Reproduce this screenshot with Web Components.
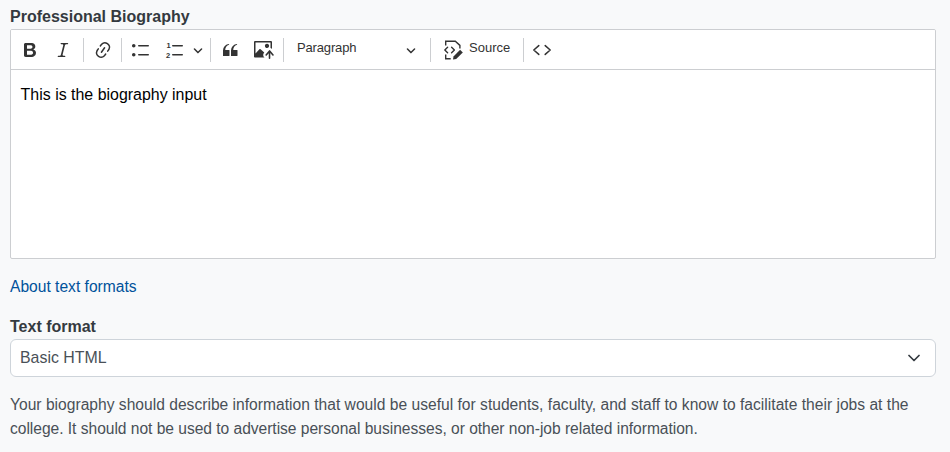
<!DOCTYPE html>
<html lang="en">
<head>
<meta charset="utf-8">
<title>Professional Biography</title>
<style>
  html, body { margin: 0; background: #f8f9fa; }
  body { font: 16px/24px "Liberation Sans", Arial, sans-serif; color: #343a40; }
  .line-a { display: block; letter-spacing: .012px; }
  .line-b { display: block; letter-spacing: -.03px; }
</style>
</head>
<body>
<bio-form>
  <form-label>Professional Biography</form-label>
  <rich-editor>This is the biography input</rich-editor>
  <format-link>About text formats</format-link>
  <form-label class="format">Text format</form-label>
  <format-select>Basic HTML</format-select>
  <help-text><span class="line-a">Your biography should describe information that would be useful for students, faculty, and staff to know to facilitate their jobs at the</span> <span class="line-b">college. It should not be used to advertise personal businesses, or other non-job related information.</span></help-text>
</bio-form>

<script>
(function () {
  const CHEVRON = `<svg class="chev" viewBox="0 0 10 10" aria-hidden="true"><path d="M.941 4.523a.75.75 0 1 1 1.06-1.06l3.006 3.005 3.005-3.005a.75.75 0 1 1 1.06 1.06l-3.549 3.55a.75.75 0 0 1-1.168-.136L.941 4.523z"/></svg>`;

  const ICONS = {
    bold: `<path d="M10.187 17H5.773c-.637 0-1.092-.138-1.364-.415-.273-.277-.409-.718-.409-1.323V4.738c0-.617.14-1.062.419-1.332.279-.27.73-.406 1.354-.406h4.68c.69 0 1.288.041 1.793.124.506.083.96.242 1.36.478.341.197.644.447.906.75a3.262 3.262 0 0 1 .808 2.162c0 1.401-.722 2.426-2.167 3.075C15.05 10.175 16 11.315 16 13.01a3.756 3.756 0 0 1-2.296 3.504 6.1 6.1 0 0 1-1.517.377c-.571.073-1.238.11-2 .11zm-.217-6.217H7v4.087h3.069c1.977 0 2.965-.69 2.965-2.072 0-.707-.256-1.22-.768-1.537-.512-.319-1.277-.478-2.296-.478zM7 5.13v3.619h2.606c.729 0 1.292-.067 1.69-.2a1.6 1.6 0 0 0 .91-.765c.165-.267.247-.566.247-.897 0-.707-.26-1.176-.778-1.409-.519-.232-1.31-.348-2.375-.348H7z"/>`,
    italic: `<path d="m9.586 14.633.021.004c-.036.335.095.655.393.962.082.083.173.15.274.201h1.474a.6.6 0 1 1 0 1.2H5.304a.6.6 0 0 1 0-1.2h1.15c.474-.07.809-.182 1.005-.334.157-.122.291-.32.404-.597l2.416-9.55a1.053 1.053 0 0 0-.281-.823 1.12 1.12 0 0 0-.442-.296H8.15a.6.6 0 0 1 0-1.2h6.443a.6.6 0 1 1 0 1.2h-1.195c-.376.056-.65.155-.823.296-.215.175-.423.439-.623.79l-2.366 9.347z"/>`,
    link: `<path d="m11.077 15 .991-1.416a.75.75 0 1 1 1.229.86l-1.148 1.64a.748.748 0 0 1-.217.206 5.251 5.251 0 0 1-8.503-5.955.741.741 0 0 1 .12-.274l1.147-1.639a.75.75 0 1 1 1.228.86L4.933 10.7l.006.003a3.75 3.75 0 0 0 6.132 4.294l.006.004zm5.494-5.335a.748.748 0 0 1-.12.274l-1.147 1.639a.75.75 0 1 1-1.228-.86l.86-1.23a3.75 3.75 0 0 0-6.144-4.301l-.86 1.229a.75.75 0 0 1-1.229-.86l1.148-1.64a.748.748 0 0 1 .217-.206 5.251 5.251 0 0 1 8.503 5.955zm-4.563-2.532a.75.75 0 0 1 .184 1.045l-3.155 4.505a.75.75 0 1 1-1.229-.86l3.155-4.506a.75.75 0 0 1 1.045-.184z"/>`,
    bullets: `<path d="M7 5.75c0 .414.336.75.75.75h9.5a.75.75 0 1 0 0-1.5h-9.5a.75.75 0 0 0-.75.75zm-6 0C1 4.784 1.777 4 2.75 4c.966 0 1.75.777 1.75 1.75 0 .966-.777 1.75-1.75 1.75C1.784 7.5 1 6.723 1 5.75zm6 9c0 .414.336.75.75.75h9.5a.75.75 0 1 0 0-1.5h-9.5a.75.75 0 0 0-.75.75zm-6 0c0-.966.777-1.75 1.75-1.75.966 0 1.75.777 1.75 1.75 0 .966-.777 1.75-1.75 1.75-.966 0-1.75-.777-1.75-1.75z"/>`,
    numbers: `<path d="M7 5.75c0 .414.336.75.75.75h9.5a.75.75 0 1 0 0-1.5h-9.5a.75.75 0 0 0-.75.75zm0 9c0 .414.336.75.75.75h9.5a.75.75 0 1 0 0-1.5h-9.5a.75.75 0 0 0-.75.75z"/><text x="1.6" y="8" font-family="Liberation Sans, sans-serif" font-weight="700" font-size="7.5">1</text><text x="1" y="17.5" font-family="Liberation Sans, sans-serif" font-weight="700" font-size="7.5">2</text>`,
    quote: `<path d="M3 10.423a6.5 6.5 0 0 1 6.056-6.408l.038.67C6.448 5.423 5.354 7.663 5.22 10H9c.552 0 .5.432.5.986v4.511c0 .554-.448.503-1 .503h-5c-.552 0-.5-.449-.5-1.003v-4.574zm8 0a6.5 6.5 0 0 1 6.056-6.408l.038.67c-2.646.739-3.74 2.979-3.873 5.315H17c.552 0 .5.432.5.986v4.511c0 .554-.448.503-1 .503h-5c-.552 0-.5-.449-.5-1.003v-4.574z"/>`,
    image: `<path d="M1.201 1C.538 1 0 1.47 0 2.1v14.363c0 .64.534 1.037 1.186 1.037h9.494a2.97 2.97 0 0 1-.414-.287 2.998 2.998 0 0 1-1.055-2.03 3.003 3.003 0 0 1 .693-2.185l.383-.455-.02.018-3.65-3.41a.695.695 0 0 0-.957-.034L1.5 13.6V2.5h15v5.535a2.97 2.97 0 0 1 1.412.932l.088.105V2.1c0-.63-.547-1.1-1.2-1.1H1.202Zm11.713 2.803a2.146 2.146 0 0 0-2.049 1.992 2.14 2.14 0 0 0 1.28 2.096 2.13 2.13 0 0 0 2.644-3.11 2.134 2.134 0 0 0-1.875-.978Z"/><path d="M15.522 19.1a.79.79 0 0 0 .79-.79v-5.373l2.059 2.455a.79.79 0 1 0 1.211-1.015l-3.352-3.995a.79.79 0 0 0-.995-.179.784.784 0 0 0-.299.221l-3.35 3.99a.79.79 0 1 0 1.21 1.017l1.936-2.306v5.185c0 .436.353.79.79.79Z"/>`,
    source: `<g fill="none" stroke="currentColor" stroke-width="1.4"><path d="M2.7 5.5V1.2h9.6l4.6 4.2v3.2"/><path d="M2.7 14.5v4.3h5"/><path d="M4.6 7.3 1.8 10l2.8 2.7M8.6 7.3l2.8 2.7-2.8 2.7" stroke-linecap="round" stroke-linejoin="round"/></g><path d="m10 19.6.5-3.2 6.6-6.6 2.7 2.7-6.6 6.6z"/>`,
    code: `<g fill="none" stroke="currentColor" stroke-width="1.5" stroke-linecap="round" stroke-linejoin="round"><path d="M6.8 5.6 1.8 10l5 4.4M13.2 5.6l5 4.4-5 4.4"/></g>`,
  };

  class FormLabel extends HTMLElement {
    constructor() {
      super();
      this.attachShadow({ mode: "open" }).innerHTML = `
        <style>
          :host { display: block; font-weight: 700; line-height: 24px; color: #343a40; }
        </style>
        <slot></slot>`;
    }
  }

  class ToolButton extends HTMLElement {
    constructor() {
      super();
      const icon = ICONS[this.getAttribute("icon")] || "";
      this.attachShadow({ mode: "open" }).innerHTML = `
        <style>
          :host { display: inline-flex; align-items: center; height: 39px; color: #333; flex: none; }
          svg { display: block; width: 20px; height: 20px; fill: currentColor; }
          span { font-size: 13px; line-height: 20px; position: relative; top: -2px; }
          :host([labelled]) span { margin-left: 6px; }
        </style>
        <svg viewBox="0 0 20 20" aria-hidden="true">${icon}</svg><span><slot></slot></span>`;
    }
  }

  class ToolSep extends HTMLElement {
    constructor() {
      super();
      this.attachShadow({ mode: "open" }).innerHTML = `
        <style>
          :host { display: block; width: 1px; height: 24px; background: #ccced1; flex: none; }
        </style>`;
    }
  }

  class EditorToolbar extends HTMLElement {
    constructor() {
      super();
      this.attachShadow({ mode: "open" }).innerHTML = `
        <style>
          :host {
            display: flex; align-items: center; height: 39px; background: #fff;
            border-bottom: 1px solid #ccced1; color: #333;
          }
          svg.chev { display: block; width: 10px; height: 10px; fill: currentColor; flex: none; }
          .b { margin-left: 9px; }
          .i { margin-left: 13px; }
          .s1 { margin-left: 10px; }
          .l { margin-left: 8.5px; }
          .s2 { margin-left: 8.5px; }
          .ul { margin-left: 9px; }
          .ol { margin-left: 14px; }
          .c1 { margin-left: 8px; }
          .s3 { margin-left: 7px; }
          .q { margin-left: 9px; }
          .im { margin-left: 14px; }
          .s4 { margin-left: 9px; }
          .para { width: 109px; margin-left: 13px; font-size: 13px; letter-spacing: -.15px; line-height: 20px; position: relative; top: -2px; flex: none; }
          .c2 { margin-left: 0; margin-top: 1px; }
          .s5 { margin-left: 14px; }
          .src { margin-left: 12px; }
          .s6 { margin-left: 13px; }
          .cd { margin-left: 8px; }
        </style>
        <tool-button class="b" icon="bold"></tool-button>
        <tool-button class="i" icon="italic"></tool-button>
        <tool-sep class="s1"></tool-sep>
        <tool-button class="l" icon="link"></tool-button>
        <tool-sep class="s2"></tool-sep>
        <tool-button class="ul" icon="bullets"></tool-button>
        <tool-button class="ol" icon="numbers"></tool-button>
        <span class="c1">${CHEVRON}</span>
        <tool-sep class="s3"></tool-sep>
        <tool-button class="q" icon="quote"></tool-button>
        <tool-button class="im" icon="image"></tool-button>
        <tool-sep class="s4"></tool-sep>
        <span class="para">Paragraph</span>
        <span class="c2">${CHEVRON}</span>
        <tool-sep class="s5"></tool-sep>
        <tool-button class="src" icon="source" labelled>Source</tool-button>
        <tool-sep class="s6"></tool-sep>
        <tool-button class="cd" icon="code"></tool-button>`;
    }
  }

  class RichEditor extends HTMLElement {
    constructor() {
      super();
      this.attachShadow({ mode: "open" }).innerHTML = `
        <style>
          :host {
            display: block; margin-right: 14px; border: 1px solid #ccced1; border-radius: 2px;
            background: #fff; overflow: hidden;
          }
          .body { height: 188px; box-sizing: border-box; padding: 13px 9.6px; color: #000; font-size: 15.95px; line-height: 24px; }
        </style>
        <editor-toolbar></editor-toolbar>
        <div class="body"><slot></slot></div>`;
    }
  }

  class FormatLink extends HTMLElement {
    constructor() {
      super();
      this.attachShadow({ mode: "open" }).innerHTML = `
        <style>
          :host { display: block; margin-top: 16px; line-height: 24px; font-size: 15.6px; }
          a { color: #00529b; text-decoration: none; }
        </style>
        <a href="#"><slot></slot></a>`;
    }
  }

  class FormatSelect extends HTMLElement {
    constructor() {
      super();
      this.attachShadow({ mode: "open" }).innerHTML = `
        <style>
          :host {
            display: flex; align-items: center; justify-content: space-between; box-sizing: border-box;
            height: 38px; margin-right: 14px; padding: 0 15px 0 9px;
            background: #fff; border: 1px solid #ced4da; border-radius: 6px;
            color: #495057; font-size: 15.9px;
          }
          svg { display: block; width: 12px; height: 12px; fill: none; stroke: #343a40; stroke-width: 1.7; stroke-linecap: round; stroke-linejoin: round; }
        </style>
        <slot></slot>
        <svg viewBox="0 0 12 12" aria-hidden="true"><path d="m1 3.5 5 5 5-5"/></svg>`;
    }
  }

  class HelpText extends HTMLElement {
    constructor() {
      super();
      this.attachShadow({ mode: "open" }).innerHTML = `
        <style>
          :host { display: block; margin: 16px 14px 0 0; line-height: 24px; font-size: 15.6px; color: #495057; }
        </style>
        <slot></slot>`;
    }
  }

  class BioForm extends HTMLElement {
    constructor() {
      super();
      this.attachShadow({ mode: "open" }).innerHTML = `
        <style>
          :host { display: block; box-sizing: border-box; padding: 5px 0 0 10px; height: 452px; overflow: hidden; }
          ::slotted(.format) { margin-top: 16px; }
        </style>
        <slot></slot>`;
    }
  }

  customElements.define("form-label", FormLabel);
  customElements.define("tool-button", ToolButton);
  customElements.define("tool-sep", ToolSep);
  customElements.define("editor-toolbar", EditorToolbar);
  customElements.define("rich-editor", RichEditor);
  customElements.define("format-link", FormatLink);
  customElements.define("format-select", FormatSelect);
  customElements.define("help-text", HelpText);
  customElements.define("bio-form", BioForm);
})();
</script>
</body>
</html>
